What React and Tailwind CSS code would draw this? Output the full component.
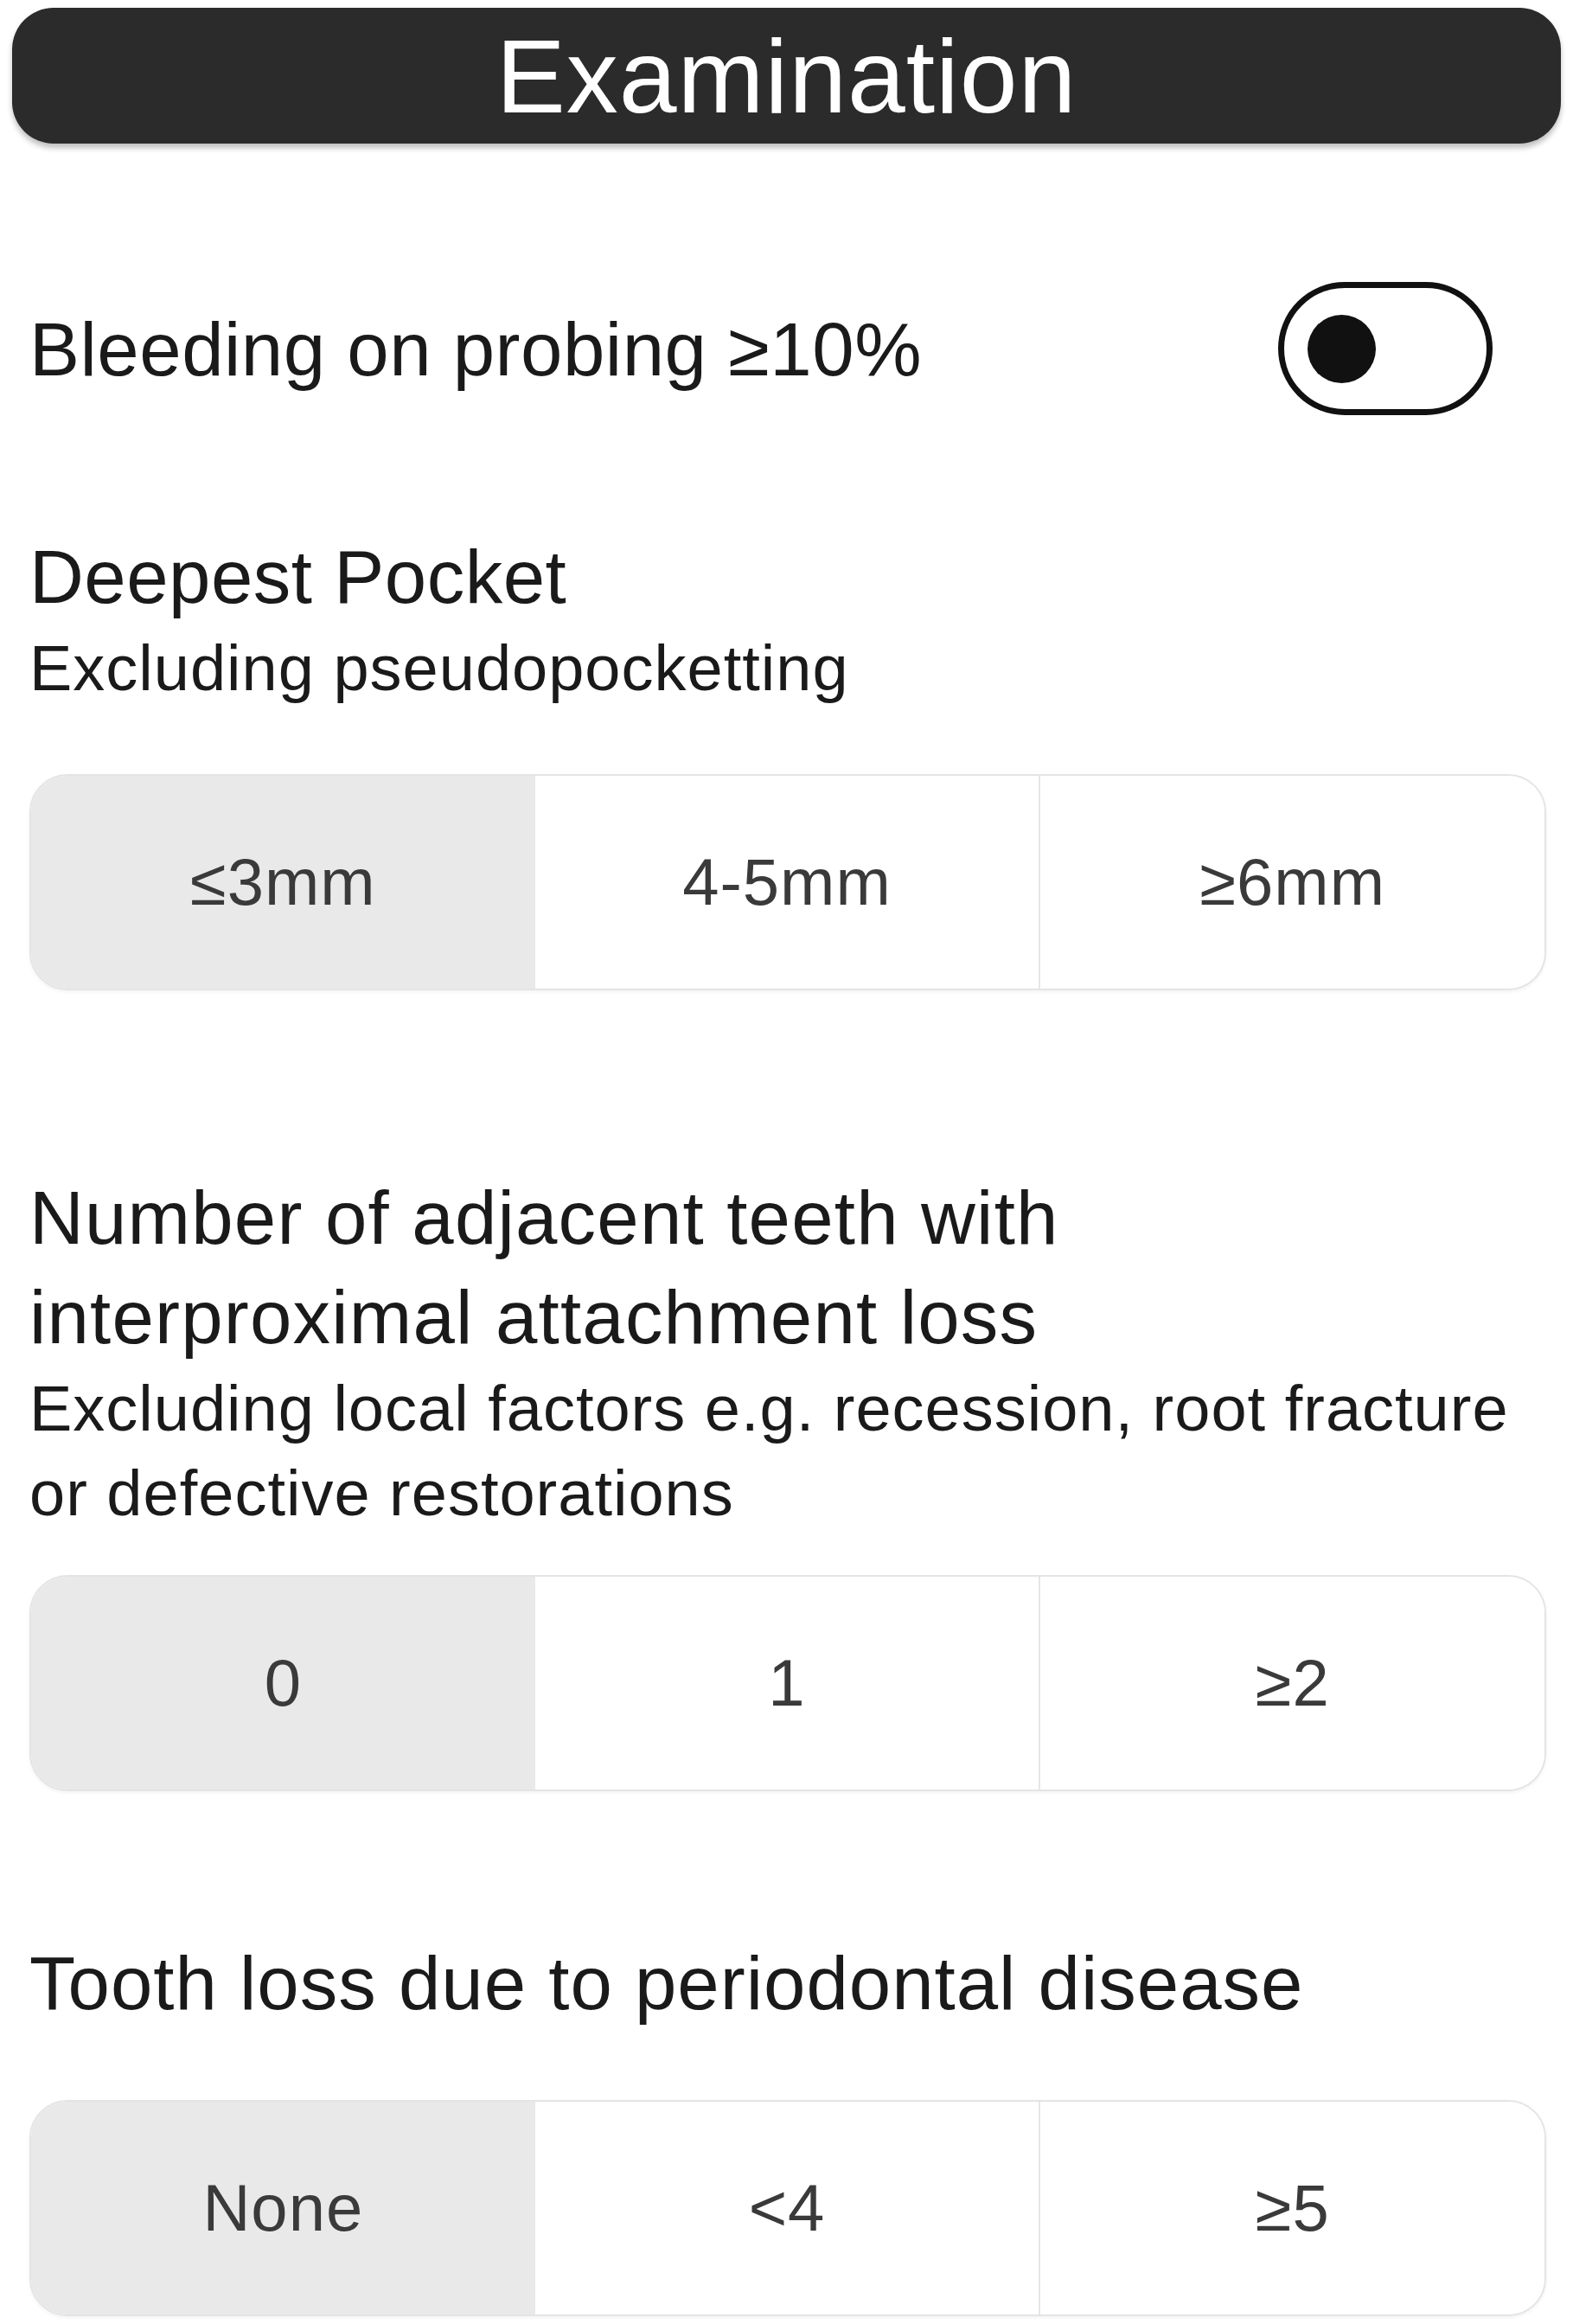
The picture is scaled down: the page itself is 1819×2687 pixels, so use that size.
import React from 'react'

const Segmented = ({ options, selected, className }) => {
    return (
        <div className={`flex h-[250px] rounded-[44px] border-2 border-[#e4e4e4] overflow-hidden bg-white shadow-[0_2px_4px_rgba(0,0,0,0.05)] ${className}`}>
            {options.map((opt, i) => (
                <div
                    key={opt}
                    className={`flex-1 flex items-center justify-center text-[76px] tracking-[1px] text-[#3a3a3a] ${i === selected ? 'bg-[#e9e9e9]' : 'bg-white'} ${i === 2 ? 'border-l-2 border-[#e6e6e6]' : ''}`}
                >
                    {opt}
                </div>
            ))}
        </div>
    )
}

const Toggle = () => {
    return (
        <div className="w-[248px] h-[154px] rounded-full border-[7px] border-[#111] bg-white flex items-center pl-[27px]">
            <div className="w-[79px] h-[79px] rounded-full bg-[#111]" />
        </div>
    )
}

const App = () => {

    const [pocket, setPocket] = React.useState(0)

    return (
        <div className="w-[1819px] h-[2687px] bg-white font-['Liberation_Sans',Arial,sans-serif] text-[#1a1a1a] overflow-hidden">

            <div className="mx-[14px] mt-[9px] h-[157px] rounded-[48px] bg-[#2b2b2b] flex items-center justify-center shadow-[0_5px_6px_rgba(0,0,0,0.25)]">
                <h1 className="text-white text-[120px] leading-none tracking-[1px]">Examination</h1>
            </div>

            <div className="pl-[34px] pr-[31px] flex flex-col">

                <div className="mt-[160px] h-[154px] flex items-center justify-between">
                    <p className="text-[87px] leading-[115px] tracking-[0.5px]">Bleeding on probing ≥10%</p>
                    <div className="mr-[62px]">
                        <Toggle />
                    </div>
                </div>

                <p className="mt-[129px] text-[87px] leading-[115px] tracking-[0.5px]">Deepest Pocket</p>
                <p className="text-[74px] leading-[98px] tracking-[1px]">Excluding pseudopocketting</p>

                <Segmented className="mt-[73px]" options={['≤3mm', '4-5mm', '≥6mm']} selected={pocket} />

                <p className="mt-[205px] text-[87px] leading-[115px] tracking-[1.2px]">
                    Number of adjacent teeth with
                    <br />
                    interproximal attachment loss
                </p>
                <p className="text-[74px] leading-[98px] tracking-[1px]">
                    Excluding local factors e.g. recession, root fracture
                    <br />
                    or defective restorations
                </p>

                <Segmented className="mt-[45px]" options={['0', '1', '≥2']} selected={0} />

                <p className="mt-[164px] text-[87px] leading-[115px] tracking-[1px]">Tooth loss due to periodontal disease</p>

                <Segmented className="mt-[78px]" options={['None', '<4', '≥5']} selected={0} />

            </div>

        </div>
    )
}

export default App
